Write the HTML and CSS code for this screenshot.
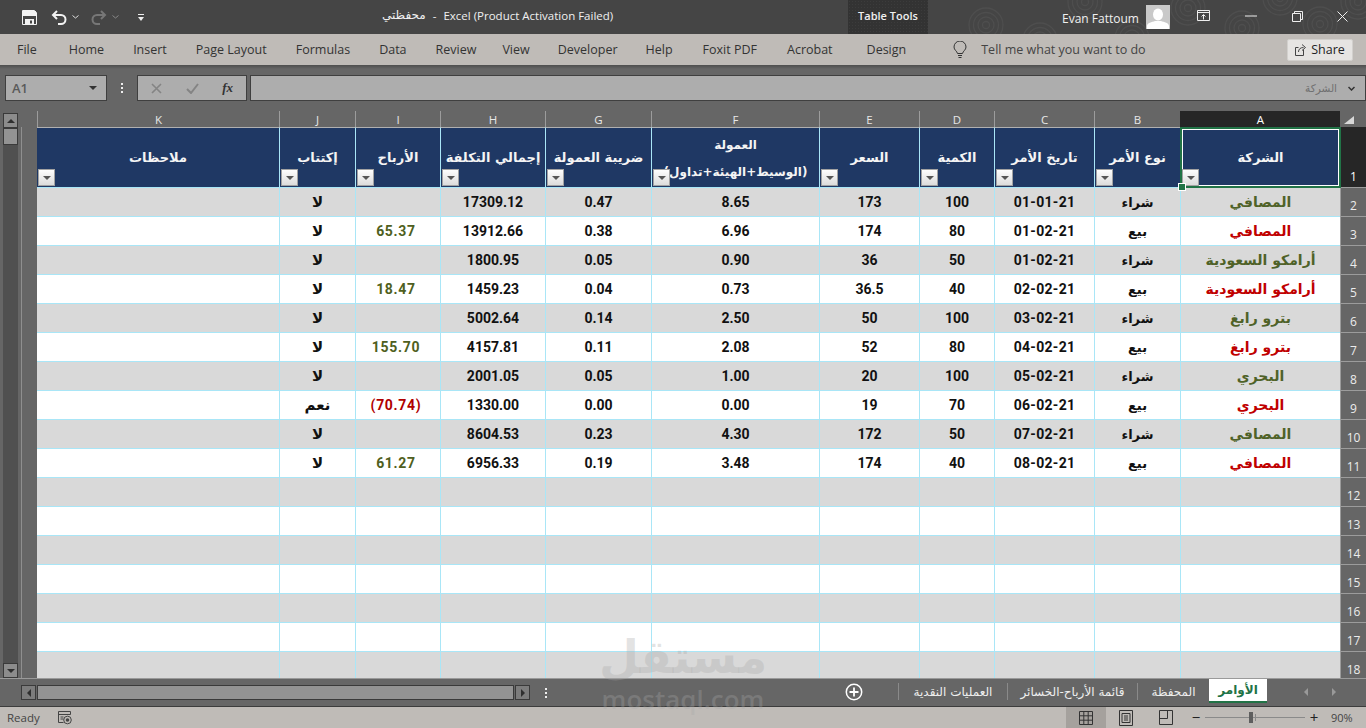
FILE: index.html
```html
<!DOCTYPE html>
<html lang="en">
<head>
<meta charset="utf-8">
<title>محفظتي - Excel</title>
<link rel="stylesheet" href="styles.css">
</head>
<body>
<header class="titlebar">
  <svg class="swirls" width="516" height="34" viewBox="0 0 516 34" aria-hidden="true">
    <defs>
      <g id="sw" fill="none" stroke="#4e4e4e" stroke-width="1.3"><circle r="3.500"/><circle r="8"/><circle r="12.500"/><circle r="17"/></g>
    </defs>
    <use href="#sw" x="-20" y="-8"/><use href="#sw" x="136" y="25"/><use href="#sw" x="190" y="40"/><use href="#sw" x="235" y="2"/><use href="#sw" x="282" y="38"/><use href="#sw" x="338" y="8"/><use href="#sw" x="392" y="28"/><use href="#sw" x="430" y="-2"/><use href="#sw" x="470" y="24"/><use href="#sw" x="508" y="2"/>
  </svg>
  <div class="qat">
    <svg class="i-save" width="15" height="15" viewBox="0 0 15 15"><path d="M.5.500h12l2 2v12H.5z" fill="none" stroke="#f2f2f2"/><rect x="1" y="1" width="13" height="5" fill="#f2f2f2"/><rect x="3" y="9" width="9" height="5" fill="#f2f2f2"/><rect x="8" y="10.500" width="2" height="3" fill="#454545"/></svg>
    <svg class="i-undo" width="16" height="15" viewBox="0 0 16 15"><path d="M6 1 2 5l4 4M2 5h8a4.500 4.500 0 0 1 0 9H7" fill="none" stroke="#f2f2f2" stroke-width="2"/></svg>
    <svg class="i-chev" width="7" height="4" viewBox="0 0 7 4"><path d="m.5.500 3 2.500 3-2.500" fill="none" stroke="#ddd"/></svg>
    <svg class="i-redo" width="16" height="15" viewBox="0 0 16 15"><path d="m10 1 4 4-4 4m4-4H6a4.500 4.500 0 0 0 0 9h3" fill="none" stroke="#777" stroke-width="2"/></svg>
    <svg class="i-chev" width="7" height="4" viewBox="0 0 7 4"><path d="m.5.500 3 2.500 3-2.500" fill="none" stroke="#888"/></svg>
    <svg class="i-cust" width="6" height="7" viewBox="0 0 6 7"><rect width="6" height="1" fill="#eee"/><path d="M0 3h6L3 7z" fill="#eee"/></svg>
  </div>
  <div class="doc-title"><span class="ar-ui">محفظتي</span><span class="dash">-</span><span>Excel (Product Activation Failed)</span></div>
  <div class="table-tools">Table Tools</div>
  <div class="user">Evan Fattoum</div>
  <svg class="avatar" width="24" height="24" viewBox="0 0 24 24"><rect width="24" height="24" fill="#c9c9c9"/><ellipse cx="12" cy="9.500" rx="5" ry="6" fill="#fff"/><path d="M1 24v-3c0-3 5-4 8-5h6c3 1 8 2 8 5v3z" fill="#fff"/></svg>
  <div class="winctl">
    <svg width="14" height="12" viewBox="0 0 14 12"><path d="M.5.500h12v10H.5z" fill="none" stroke="#eee"/><path d="M.5 2.500h12" stroke="#eee"/><path d="M6.500 9.500V5M4.500 6.500l2-2 2 2" fill="none" stroke="#eee"/></svg>
    <svg width="12" height="2" viewBox="0 0 12 2"><path d="M0 1h12" stroke="#eee"/></svg>
    <svg width="11" height="11" viewBox="0 0 11 11"><path d="M.5 2.500h8v8h-8zM2.500 2.500v-2h8v8h-2" fill="none" stroke="#eee"/></svg>
    <svg width="11" height="11" viewBox="0 0 11 11"><path d="m.5.500 10 10m0-10-10 10" stroke="#eee"/></svg>
  </div>
</header>

<nav class="ribbon">
  <span class="tab t-file">File</span><span class="tab">Home</span><span class="tab">Insert</span><span class="tab">Page Layout</span><span class="tab">Formulas</span><span class="tab">Data</span><span class="tab">Review</span><span class="tab t-view">View</span><span class="tab t-dev">Developer</span><span class="tab t-dev">Help</span><span class="tab t-fox">Foxit PDF</span><span class="tab t-fox">Acrobat</span><span class="tab t-design">Design</span>
  <svg class="bulb" width="14" height="18" viewBox="0 0 14 18"><path d="M4.500 12.500C4 10 1 9 1 6a6 6 0 0 1 12 0c0 3-3 4-3.500 6.500z" fill="none" stroke="#333"/><path d="M5 14.500h4M5.500 16.500h3" stroke="#333"/></svg>
  <span class="tell">Tell me what you want to do</span>
  <span class="share"><svg width="12" height="12" viewBox="0 0 12 12"><path d="M8.500 5.500v6H.5v-8h3" fill="none" stroke="#444"/><path d="M3.500 8c0-3 2-4.500 5-4.500M7 .5l3.500 3L7 6.500" fill="none" stroke="#444"/></svg>Share</span>
</nav>

<section class="fbar">
  <div class="namebox"><span>A1</span><i class="tri-down"></i></div>
  <div class="dots"><b></b><b></b><b></b></div>
  <div class="fbtns">
    <svg width="11" height="11" viewBox="0 0 11 11"><path d="m1 1 9 9m0-9-9 9" stroke="#848484" stroke-width="1.600"/></svg>
    <svg width="13" height="11" viewBox="0 0 13 11"><path d="m1 6 4 4 7-9" fill="none" stroke="#848484" stroke-width="2"/></svg>
    <span class="fx">fx</span>
  </div>
  <div class="finput"><span class="fval">الشركة</span><svg width="7" height="5" viewBox="0 0 7 5"><path d="m.5 1 3 3 3-3" fill="none" stroke="#333" stroke-width="1.500"/></svg></div>
</section>

<main class="sheet">
  <div class="vscroll">
    <div class="sbtn"><i class="tri-up"></i></div>
    <div class="vthumb"></div>
    <div class="vtrack"></div>
    <div class="sbtn"><i class="tri-down small"></i></div>
  </div>
  <div class="gutter"></div>
  <table class="grid">
    <colgroup><col class="ck"><col class="cj"><col class="ci"><col class="ch"><col class="cg"><col class="cf"><col class="ce"><col class="cd"><col class="cc"><col class="cb"><col class="ca"><col class="cn"></colgroup>
    <thead>
      <tr class="letters"><th>K</th><th>J</th><th>I</th><th>H</th><th>G</th><th>F</th><th>E</th><th>D</th><th>C</th><th>B</th><th class="on">A</th><th class="corner"><i></i></th></tr>
      <tr class="hdr">
        <td><span>ملاحظات</span><i class="flt"></i></td>
        <td><span>إكتتاب</span><i class="flt"></i></td>
        <td><span>الأرباح</span><i class="flt"></i></td>
        <td><span>إجمالي التكلفة</span><i class="flt"></i></td>
        <td><span>ضريبة العمولة</span><i class="flt"></i></td>
        <td><span class="two">العمولة<br>(الوسيط+الهيئة+تداول)</span><i class="flt"></i></td>
        <td><span>السعر</span><i class="flt"></i></td>
        <td><span>الكمية</span><i class="flt"></i></td>
        <td><span>تاريخ الأمر</span><i class="flt"></i></td>
        <td><span>نوع الأمر</span><i class="flt"></i></td>
        <td class="sel"><span>الشركة</span><i class="flt"></i></td>
        <th class="rn on">1</th>
      </tr>
    </thead>
    <tbody>
      <tr class="g"><td></td><td class="ar yn">لا</td><td></td><td>17309.12</td><td>0.47</td><td>8.65</td><td>173</td><td>100</td><td class="dt">01-01-21</td><td class="ar">شراء</td><td class="co buy">المصافي</td><th class="rn">2</th></tr>
      <tr><td></td><td class="ar yn">لا</td><td class="pos">65.37</td><td>13912.66</td><td>0.38</td><td>6.96</td><td>174</td><td>80</td><td class="dt">01-02-21</td><td class="ar">بيع</td><td class="co sell">المصافي</td><th class="rn">3</th></tr>
      <tr class="g"><td></td><td class="ar yn">لا</td><td></td><td>1800.95</td><td>0.05</td><td>0.90</td><td>36</td><td>50</td><td class="dt">01-02-21</td><td class="ar">شراء</td><td class="co buy">أرامكو السعودية</td><th class="rn">4</th></tr>
      <tr><td></td><td class="ar yn">لا</td><td class="pos">18.47</td><td>1459.23</td><td>0.04</td><td>0.73</td><td>36.5</td><td>40</td><td class="dt">02-02-21</td><td class="ar">بيع</td><td class="co sell">أرامكو السعودية</td><th class="rn">5</th></tr>
      <tr class="g"><td></td><td class="ar yn">لا</td><td></td><td>5002.64</td><td>0.14</td><td>2.50</td><td>50</td><td>100</td><td class="dt">03-02-21</td><td class="ar">شراء</td><td class="co buy">بترو رابغ</td><th class="rn">6</th></tr>
      <tr><td></td><td class="ar yn">لا</td><td class="pos">155.70</td><td>4157.81</td><td>0.11</td><td>2.08</td><td>52</td><td>80</td><td class="dt">04-02-21</td><td class="ar">بيع</td><td class="co sell">بترو رابغ</td><th class="rn">7</th></tr>
      <tr class="g"><td></td><td class="ar yn">لا</td><td></td><td>2001.05</td><td>0.05</td><td>1.00</td><td>20</td><td>100</td><td class="dt">05-02-21</td><td class="ar">شراء</td><td class="co buy">البحري</td><th class="rn">8</th></tr>
      <tr><td></td><td class="ar yn">نعم</td><td class="neg">(70.74)</td><td>1330.00</td><td>0.00</td><td>0.00</td><td>19</td><td>70</td><td class="dt">06-02-21</td><td class="ar">بيع</td><td class="co sell">البحري</td><th class="rn">9</th></tr>
      <tr class="g"><td></td><td class="ar yn">لا</td><td></td><td>8604.53</td><td>0.23</td><td>4.30</td><td>172</td><td>50</td><td class="dt">07-02-21</td><td class="ar">شراء</td><td class="co buy">المصافي</td><th class="rn">10</th></tr>
      <tr><td></td><td class="ar yn">لا</td><td class="pos">61.27</td><td>6956.33</td><td>0.19</td><td>3.48</td><td>174</td><td>40</td><td class="dt">08-02-21</td><td class="ar">بيع</td><td class="co sell">المصافي</td><th class="rn">11</th></tr>
      <tr class="g"><td></td><td></td><td></td><td></td><td></td><td></td><td></td><td></td><td></td><td></td><td></td><th class="rn">12</th></tr>
      <tr><td></td><td></td><td></td><td></td><td></td><td></td><td></td><td></td><td></td><td></td><td></td><th class="rn">13</th></tr>
      <tr class="g"><td></td><td></td><td></td><td></td><td></td><td></td><td></td><td></td><td></td><td></td><td></td><th class="rn">14</th></tr>
      <tr><td></td><td></td><td></td><td></td><td></td><td></td><td></td><td></td><td></td><td></td><td></td><th class="rn">15</th></tr>
      <tr class="g"><td></td><td></td><td></td><td></td><td></td><td></td><td></td><td></td><td></td><td></td><td></td><th class="rn">16</th></tr>
      <tr><td></td><td></td><td></td><td></td><td></td><td></td><td></td><td></td><td></td><td></td><td></td><th class="rn">17</th></tr>
      <tr class="g"><td></td><td></td><td></td><td></td><td></td><td></td><td></td><td></td><td></td><td></td><td></td><th class="rn">18</th></tr>
    </tbody>
  </table>
</main>

<section class="tabsbar">
  <div class="hscroll">
    <div class="hbtn"><i class="tri-left"></i></div>
    <div class="hthumb"></div>
    <div class="hbtn"><i class="tri-right"></i></div>
  </div>
  <div class="dots hd"><b></b><b></b><b></b></div>
  <svg class="addsheet" width="18" height="18" viewBox="0 0 18 18"><circle cx="9" cy="9" r="7.700" fill="none" stroke="#fff" stroke-width="1.500"/><path d="M9 4.500v9M4.500 9h9" stroke="#fff" stroke-width="1.800"/></svg>
  <div class="sheets">
    <span class="st">العمليات النقدية</span>
    <span class="st">قائمة الأرباح-الخسائر</span>
    <span class="st">المحفظة</span>
    <span class="st active">الأوامر</span>
  </div>
  <div class="navs"><i class="tri-left dim"></i><i class="tri-right dim"></i></div>
</section>

<footer class="status">
  <span class="ready">Ready</span>
  <svg class="macro" width="14" height="14" viewBox="0 0 14 14"><path d="M.5.500h12v3M.5.500v11h5M.5 3.500h12" fill="none" stroke="#444"/><path d="M2.500 6h3M2.500 8h3" stroke="#444"/><circle cx="9.500" cy="9" r="3.800" fill="none" stroke="#444"/><circle cx="9.500" cy="9" r="1.800" fill="#444"/></svg>
  <div class="views">
    <span class="vb on"><svg width="14" height="14" viewBox="0 0 14 14"><path d="M.5.500h13v13H.5zM.5 4.800h13M.5 9.200h13M4.800.5v13M9.200.5v13" fill="none" stroke="#333"/></svg></span>
    <span class="vb"><svg width="14" height="16" viewBox="0 0 14 16"><path d="M.5.500h13v15H.5z" fill="none" stroke="#333"/><path d="M3 3.500h8v9H3zM5 6h4M5 8h4M5 10h4" fill="none" stroke="#333"/></svg></span>
    <span class="vb"><svg width="14" height="15" viewBox="0 0 14 15"><path d="M.5.500h13v14H.5zM.5 8.500h8V.5" fill="none" stroke="#333"/></svg></span>
  </div>
  <div class="zoom">
    <span class="zm">−</span>
    <div class="slider"><i class="mark"></i><i class="knob"></i></div>
    <span class="zp">+</span>
    <span class="pct">90%</span>
  </div>
</footer>

<div class="watermark" aria-hidden="true"><span class="wm-ar">مستقل</span><span class="wm-en">mostaql.com</span></div>
</body>
</html>
```
FILE: styles.css
```css
* { box-sizing: border-box; }
html, body { margin: 0; padding: 0; }
body {
  width: 1366px; height: 728px; overflow: hidden; position: relative;
  display: flex; flex-direction: column;
  font-family: "Open Sans", "DejaVu Sans", sans-serif;
  background: #666;
}
i { display: block; font-style: normal; }

/* title bar */
.titlebar { height: 34px; flex: none; background: #454545; color: #f0f0f0; display: flex; align-items: center; position: relative; overflow: hidden; }
.swirls { position: absolute; left: 850px; top: 0; }
.qat { display: flex; align-items: center; width: 382px; padding-left: 22px; position: relative; }
.i-undo { margin-left: 14px; }
.i-chev { margin-left: 5px; }
.i-redo { margin-left: 12px; }
.i-cust { margin-left: 19px; }
.doc-title { width: 232px; display: flex; gap: 7px; font-size: 11.500px; white-space: nowrap; position: relative; margin-top: -3px; }
.ar-ui { font-family: "DejaVu Sans", sans-serif; font-size: 12px; }
.table-tools { margin-left: 234px; width: 80px; height: 34px; background: #333 radial-gradient(#3c3c3c 1px, transparent 1px) 0 0 / 3px 3px; font-size: 11px; font-weight: 600; display: flex; align-items: center; justify-content: center; padding-bottom: 3px; position: relative; }
.user { margin-left: 134px; font-size: 12px; position: relative; white-space: nowrap; width: 84px; margin-top: 2px; }
.avatar { position: relative; }
.winctl { position: relative; width: 196px; display: flex; align-items: center; justify-content: space-between; padding: 0 18px 2px 27px; }

/* ribbon */
.ribbon { height: 31px; flex: none; background: #bfbbb7; display: flex; align-items: center; gap: 29px; padding-left: 17px; font-size: 12.500px; color: #333; white-space: nowrap; }
.t-file { margin-right: 3px; }
.t-view { margin-left: -3px; }
.t-dev { margin-left: -1px; }
.t-fox { margin-left: 1px; }
.t-design { margin-left: 5px; }
.bulb { margin-left: 18px; margin-right: -15px; }
.share { width: 66px; height: 22px; margin-left: auto; margin-right: 13px; display: flex; align-items: center; justify-content: center; gap: 4px; background: #e6e4e2; border: 1px solid #d2d0cd; border-radius: 2px; font-size: 12.500px; color: #222; }
.tell { color: #444; }

/* formula bar */
.fbar { height: 46px; flex: none; display: flex; align-items: flex-start; padding: 10px 0 0 5px; background: linear-gradient(#4e4e4e, #666 4px); }
.namebox { width: 102px; height: 26px; background: #adadad; border: 1px solid #3f3f3f; display: flex; align-items: center; justify-content: space-between; padding: 0 9px 0 6px; font-size: 13px; color: #5a5a5a; font-weight: 600; }
.namebox .tri-down { border-top-color: #333; }
.tri-down { width: 0; height: 0; border: 4px solid transparent; border-top: 4px solid #333; border-bottom: 0; }
.tri-down.small { border-top-color: #2f2f2f; }
.tri-up { width: 0; height: 0; border: 4px solid transparent; border-bottom: 4px solid #2f2f2f; border-top: 0; }
.tri-left { width: 0; height: 0; border: 4px solid transparent; border-right: 4px solid #2f2f2f; border-left: 0; }
.tri-right { width: 0; height: 0; border: 4px solid transparent; border-left: 4px solid #2f2f2f; border-right: 0; }
.tri-left.dim { border-right-color: #999; }
.tri-right.dim { border-left-color: #999; }
.dots { width: 30px; height: 26px; display: flex; flex-direction: column; align-items: center; justify-content: center; gap: 2px; }
.dots b { width: 2px; height: 2px; background: #eee; display: block; }
.fbtns { width: 110px; height: 26px; background: #adadad; border: 1px solid #3f3f3f; display: flex; align-items: center; justify-content: space-between; padding: 0 13px 0 13px; }
.fx { font-family: "Liberation Serif", serif; font-style: italic; font-weight: 700; font-size: 13px; color: #333; }
.finput { width: 1116px; height: 26px; margin-left: 3px; background: #adadad; border: 1px solid #3f3f3f; display: flex; align-items: center; justify-content: flex-end; gap: 11px; padding-right: 10px; }
.fval { font-family: "DejaVu Sans", sans-serif; font-size: 10.500px; color: #707070; }

/* sheet */
.sheet { height: 568px; flex: none; display: flex; overflow: hidden; border-bottom: 1px solid #9a9a9a; }
.vscroll { width: 18px; margin-left: 3px; padding-top: 2px; flex: none; display: flex; flex-direction: column; }
.sbtn { width: 15px; height: 15px; background: #8c8c8c; border: 1px solid #3a3a3a; display: flex; align-items: center; justify-content: center; flex: none; }
.vthumb { width: 15px; height: 17px; background: #939393; border: 1px solid #3a3a3a; flex: none; }
.vtrack { flex: 1; width: 15px; background: #505050; }
.gutter { width: 16px; flex: none; margin-top: 16px; border-left: 1px solid #8f8f8f; }
.grid { border-collapse: separate; border-spacing: 0; table-layout: fixed; width: 1329px; flex: none; align-self: flex-start; }
.ck { width: 242px; } .cj { width: 76px; } .ci { width: 85px; } .ch { width: 105px; } .cg { width: 106px; }
.cf { width: 168px; } .ce { width: 100px; } .cd { width: 75px; } .cc { width: 100px; } .cb { width: 86px; }
.ca { width: 160px; } .cn { width: 26px; }

.letters th { height: 16px; padding: 0; background: #666; color: #e8e8e8; font-weight: 400; font-size: 11.500px; border-left: 1px solid #9c9c9c; line-height: 15px; }
.letters th.on { background: #262626; color: #fff; border-left-color: #262626; }
.letters th.corner { background: #666; border-left: 0; position: relative; }
.corner i { position: absolute; left: 4px; top: 5px; width: 0; height: 0; border-left: 10px solid transparent; border-bottom: 8px solid #d8d8d8; }

td { padding: 0; height: 29px; border-left: 1px solid #a9e6f7; border-bottom: 1px solid #a9e6f7; background: #fff; text-align: center; vertical-align: middle; font-family: Roboto, "DejaVu Sans", sans-serif; font-weight: 700; font-size: 14px; color: #111; white-space: nowrap; overflow: hidden; }
tr.g td { background: #d9d9d9; }
tr > td:first-child { border-left: 0; }
.dt { letter-spacing: .3px; }
.ar { font-family: "DejaVu Sans", sans-serif; font-size: 13px; font-weight: 700; }
.yn { font-size: 15px; }
.co { font-family: "DejaVu Sans", sans-serif; font-size: 14px; font-weight: 700; }
.buy { color: #4f6228; }
.sell { color: #c00000; }
.pos { color: #4f5f20; letter-spacing: .7px; padding-right: 4px; }
.neg { color: #b00000; letter-spacing: .7px; padding-right: 4px; }

.hdr td { height: 61px; background: #1f3864; color: #f4f4f4; font-family: "DejaVu Sans", sans-serif; font-size: 13px; position: relative; border-top: 1px solid #b0b0b0; }
.hdr td span { display: block; margin-top: -1px; }
.hdr td span.two { line-height: 27px; margin-top: 3px; font-size: 12px; }
.flt { position: absolute; left: 1px; bottom: 1px; width: 17px; height: 17px; background: linear-gradient(#fdfdfd, #dcdcdc); border: 1px solid #a2a2a2; }
.flt::after { content: ""; position: absolute; left: 4px; top: 6px; border: 4px solid transparent; border-top: 4px solid #555; border-bottom: 0; }
.hdr td.sel { overflow: visible; }
.hdr td.sel::before { content: ""; position: absolute; left: -1px; right: -1px; top: -1px; bottom: -1px; border: 2px solid #217346; box-shadow: inset 0 0 0 1px #fff; z-index: 2; }
.hdr td.sel .flt { left: 1px; bottom: 1px; z-index: 3; }
.hdr td.sel::after { content: ""; position: absolute; left: -3px; bottom: -4px; width: 6px; height: 6px; background: #217346; border: 1px solid #fff; z-index: 4; }

.rn { padding: 0 0 2px; background: #666; color: #ececec; font-weight: 400; font-size: 12px; text-align: center; vertical-align: bottom; border-bottom: 1px solid #9c9c9c; border-left: 1px solid #9c9c9c; }
.rn.on { background: #262626; color: #fff; border-left-color: #262626; }

/* sheet tabs */
.tabsbar { height: 27px; flex: none; background: #666; display: flex; align-items: flex-start; position: relative; }
.hscroll { margin: 6px 0 0 21px; display: flex; height: 15px; width: 509px; flex: none; }
.hbtn { width: 15px; height: 15px; flex: none; background: #7c7c7c; border: 1px solid #3a3a3a; display: flex; align-items: center; justify-content: center; }
.hthumb { flex: 1; background: #939393; border: 1px solid #3a3a3a; margin: 0 1px; }
.hd { height: 15px; width: 32px; margin-top: 6px; }
.addsheet { margin: 4px 0 0 283px; flex: none; }
.sheets { display: flex; margin-left: 35px; height: 24px; align-items: stretch; font-family: "DejaVu Sans", sans-serif; font-size: 12px; color: #eee; flex: none; }
.st { display: flex; align-items: center; justify-content: center; white-space: nowrap; border-left: 1px solid #8a8a8a; height: 17px; margin-top: 4px; }
.st:nth-child(1) { width: 109px; }
.st:nth-child(2) { width: 130px; }
.st:nth-child(3) { width: 72px; }
.st.active { width: 58px; height: 24px; margin-top: 0; background: #fff; color: #217346; font-weight: 700; border: 0; border-bottom: 2px solid #217346; }
.navs { display: flex; margin: 9px 0 0 37px; gap: 24px; }

/* status */
.status { height: 22px; flex: none; background: #bfbbb7; border-top: 1px solid #3c3c3c; display: flex; align-items: center; font-size: 11.500px; color: #444; }
.ready { margin-left: 7px; width: 51px; }
.macro { flex: none; }
.views { display: flex; margin-left: 994px; height: 21px; }
.vb { width: 40px; display: flex; align-items: center; justify-content: center; }
.vb.on { background: #a5a19d; }
.zoom { display: flex; align-items: center; margin-left: 3px; }
.zm { font-size: 15px; width: 14px; color: #222; line-height: 1; text-align: center; }
.slider { width: 100px; height: 1px; background: #8a8a8a; margin-left: 2px; position: relative; }
.mark { position: absolute; left: 50px; top: -3px; width: 1px; height: 7px; background: #8a8a8a; }
.knob { position: absolute; left: 44px; top: -5px; width: 4px; height: 11px; background: #5e5e5e; }
.zp { font-size: 15px; width: 18px; color: #222; text-align: center; line-height: 1; }
.pct { margin-left: 8px; font-size: 11px; color: #444; }

/* watermark */
.watermark { position: absolute; left: 600px; top: 630px; width: 166px; display: flex; flex-direction: column; align-items: center; gap: 2px; color: rgba(168,168,168,.31); pointer-events: none; }
.wm-ar { font-family: "DejaVu Sans", sans-serif; font-weight: 700; font-size: 46px; line-height: 54px; }
.wm-en { font-family: "Open Sans", sans-serif; font-weight: 600; font-size: 26px; line-height: 26px; }
```
